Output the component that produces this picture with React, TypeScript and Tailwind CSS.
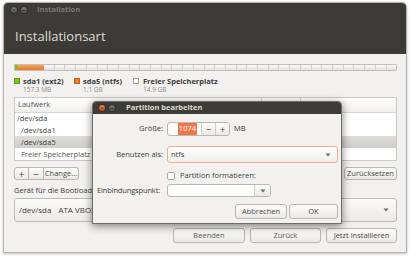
import React from "react";

const btn =
  "flex items-center justify-center rounded-[3px] border border-[#bab7b2] bg-gradient-to-b from-[#fcfcfb] to-[#ebe9e6] text-[#4a4a4a]";

function Arrow() {
  return (
    <svg width="6" height="4" viewBox="0 0 6 4">
      <path d="M0.5 0.5 L5.5 0.5 L3 3.5 Z" fill="#6b6964" />
    </svg>
  );
}

function Dots({ active }: { active?: boolean }) {
  return (
    <div className="flex items-center gap-[2px]">
      <div
        className={
          active
            ? "w-[8px] h-[8px] rounded-full bg-gradient-to-b from-[#f58b5c] to-[#dd4814] border border-[#2f2e2b] flex items-center justify-center text-[6px] leading-none text-[#3c3b37] font-bold"
            : "w-[8px] h-[8px] rounded-full bg-gradient-to-b from-[#7a7974] to-[#5c5b56] border border-[#2f2e2b] flex items-center justify-center text-[6px] leading-none text-[#3c3b37] font-bold"
        }
      >
        ×
      </div>
      <div className="w-[8px] h-[8px] rounded-full bg-gradient-to-b from-[#7a7974] to-[#5c5b56] border border-[#2f2e2b] flex items-center justify-center">
        <div className="w-[4px] h-[1px] bg-[#3c3b37]" />
      </div>
    </div>
  );
}

export default function App() {
  return (
    <div className="relative w-[410px] h-[257px] bg-white pt-[2px] pl-[3px] font-['Open_Sans',sans-serif] text-[7.5px] text-[#3c3c3c]">
      {/* Main window */}
      <div className="w-[404px] h-[251px] flex flex-col rounded-t-[5px] overflow-hidden border border-[#b5b3ae] bg-[#f2f1f0] shadow-[0_1px_3px_rgba(0,0,0,0.25)]">
        <div className="h-[51px] bg-[#3c3b37] flex flex-col">
          <div className="h-[14px] flex items-center pl-[6px] gap-[9px]">
            <Dots />
            <span className="font-bold text-[#7d7a73] text-[7.5px]">Installation</span>
          </div>
          <div className="pl-[11px] pt-[11px] text-[13px] leading-[16px] text-[#dfdbd2]">Installationsart</div>
        </div>

        <div className="flex flex-col pl-[10px] pr-[9px]">
          {/* partition bar */}
          <div className="mt-[10px] h-[7px] flex rounded-[1px] border border-[#c3c1bc] overflow-hidden">
            <div className="w-[2px] bg-[#6fc41d]" />
            <div className="w-[27px] bg-gradient-to-b from-[#f3a25a] to-[#e9772b]" />
            <div className="flex-1 flex bg-gradient-to-b from-[#fafafa] to-[#e2e1de]">
              {Array.from({ length: 33 }).map((_, i) => (
                <div key={i} className="flex-1 border-r border-[#d3d1cd] last:border-r-0" />
              ))}
            </div>
          </div>

          {/* legend */}
          <div className="mt-[6px] flex">
            <div className="flex w-[60px]">
              <div className="mt-[1px] w-[6px] h-[6px] bg-[#73c81f] border border-[#5a9f17]" />
              <div className="ml-[3px] flex flex-col">
                <span className="font-bold h-[9px] leading-[8px]">sda1 (ext2)</span>
                <span className="text-[6.5px] h-[7px] leading-[7px] text-[#8c8a86]">157.3 MB</span>
              </div>
            </div>
            <div className="flex w-[59px]">
              <div className="mt-[1px] w-[6px] h-[6px] bg-[#ee7b2c] border border-[#c45f1b]" />
              <div className="ml-[3px] flex flex-col">
                <span className="font-bold h-[9px] leading-[8px]">sda5 (ntfs)</span>
                <span className="text-[6.5px] h-[7px] leading-[7px] text-[#8c8a86]">1.1 GB</span>
              </div>
            </div>
            <div className="flex">
              <div className="mt-[1px] w-[6px] h-[6px] bg-white border border-[#9d9b97]" />
              <div className="ml-[4px] flex flex-col">
                <span className="font-bold h-[9px] leading-[8px]">Freier Speicherplatz</span>
                <span className="text-[6.5px] h-[7px] leading-[7px] text-[#8c8a86]">14.9 GB</span>
              </div>
            </div>
          </div>

          {/* table */}
          <div className="mt-[4px] h-[64px] bg-white border border-[#cbc8c3] flex flex-col">
            <div className="h-[15px] flex border-b border-[#d8d6d2] bg-gradient-to-b from-[#ffffff] to-[#f0efed]">
              <div className="w-[247px] pl-[3px] flex items-center border-r border-[#dcdad6] text-[#555]">Laufwerk</div>
              <div className="w-[39px] border-r border-[#dcdad6]" />
              <div className="flex-1" />
            </div>
            <div className="h-[12px] flex items-center pl-[2px]">/dev/sda</div>
            <div className="h-[12px] flex items-center pl-[6px]">/dev/sda1</div>
            <div className="h-[12px] flex items-center pl-[6px] bg-gradient-to-b from-[#dedcd8] to-[#cfcdc9]">/dev/sda5</div>
            <div className="h-[12px] flex items-center pl-[6px] text-[#555]">Freier Speicherplatz</div>
          </div>

          {/* table buttons */}
          <div className="mt-[6px] h-[13px] flex justify-between">
            <div className="flex">
              <div className={btn + " w-[15px] rounded-r-none text-[10px] leading-none"}>+</div>
              <div className={btn + " w-[15px] rounded-none border-l-0 text-[10px] leading-none"}>−</div>
              <div className={btn + " w-[35px] rounded-l-none border-l-0"}>Change...</div>
            </div>
            <div className={btn + " w-[53px]"}>Zurücksetzen</div>
          </div>

          <div className="mt-[6px] h-[9px] leading-[9px]">Gerät für die Bootloader-Installation:</div>

          <div className="mt-[3px] h-[24px] flex items-center rounded-[3px] border border-[#bdbab5] bg-gradient-to-b from-[#fbfbfa] to-[#eceae7] pl-[4px] pr-[7px]">
            <span className="text-[8px]">/dev/sda</span>
            <span className="ml-[7px] text-[8px]">ATA VBOX HARDDISK (8.6 GB)</span>
            <div className="ml-auto">
              <Arrow />
            </div>
          </div>

          <div className="mt-[6px] h-[15px] flex justify-end gap-[5px]">
            <div className={btn + " w-[72px] text-[#5a5a5a]"}>Beenden</div>
            <div className={btn + " w-[71px] text-[#5a5a5a]"}>Zurück</div>
            <div className={btn + " w-[71px] border-[#8c8984]"}>Jetzt installieren</div>
          </div>
        </div>
      </div>

      {/* Dialog window */}
      <div className="absolute left-[92px] top-[101px] w-[250px] h-[123px] flex flex-col rounded-t-[4px] overflow-hidden bg-[#f2f1f0] border border-[#6f6d68] shadow-[0_2px_9px_rgba(0,0,0,0.5)]">
        <div className="h-[12px] bg-[#3c3b37] flex items-center pl-[5px] gap-[10px]">
          <Dots active />
          <span className="font-bold text-[#dfdbd2]">Partition bearbeiten</span>
        </div>
        <div className="flex-1 flex flex-col pl-[3px] pr-[3px]">
          <div className="mt-[8px] h-[14px] grid grid-cols-[67px_1fr] gap-x-[4px] items-center">
            <span className="text-right">Größe:</span>
            <div className="flex items-center">
              <div className="w-[63px] h-[14px] flex rounded-[3px] border border-[#bab7b2] bg-white overflow-hidden">
                <div className="flex-1 flex items-center justify-end pr-[4px]">
                  <span className="bg-[#f07746] text-white px-[1px]">1074</span>
                </div>
                <div className="w-[14px] flex items-center justify-center border-l border-[#cfccc7] bg-gradient-to-b from-[#fcfcfb] to-[#ebe9e6] text-[9px] leading-none">−</div>
                <div className="w-[14px] flex items-center justify-center border-l border-[#cfccc7] bg-gradient-to-b from-[#fcfcfb] to-[#ebe9e6] text-[9px] leading-none">+</div>
              </div>
              <span className="ml-[4px]">MB</span>
            </div>
          </div>

          <div className="mt-[10px] h-[17px] grid grid-cols-[67px_1fr] gap-x-[4px] items-center">
            <span className="text-right">Benutzen als:</span>
            <div className="h-[17px] flex items-center rounded-[3px] border border-[#e9b08c] bg-gradient-to-b from-[#fdfdfc] to-[#efeeec] pl-[3px] pr-[6px]">
              <span>ntfs</span>
              <div className="ml-auto">
                <Arrow />
              </div>
            </div>
          </div>

          <div className="mt-[7px] h-[8px] grid grid-cols-[67px_1fr] gap-x-[4px] items-center">
            <span />
            <div className="flex items-center">
              <div className="w-[8px] h-[8px] rounded-[2px] border border-[#a9a6a1] bg-white" />
              <span className="ml-[5px]">Partition formatieren:</span>
            </div>
          </div>

          <div className="mt-[6px] h-[13px] grid grid-cols-[67px_1fr] gap-x-[4px] items-center">
            <span className="pl-[1px] tracking-[-0.15px] whitespace-nowrap">Einbindungspunkt:</span>
            <div className="w-[104px] h-[13px] flex rounded-[3px] border border-[#bab7b2] bg-white overflow-hidden">
              <div className="flex-1" />
              <div className="w-[16px] flex items-center justify-center border-l border-[#cfccc7] bg-gradient-to-b from-[#fcfcfb] to-[#ebe9e6]">
                <Arrow />
              </div>
            </div>
          </div>

          <div className="mt-[7px] h-[15px] flex justify-end gap-[2px]">
            <div className={btn + " w-[52px]"}>Abbrechen</div>
            <div className={btn + " w-[49px]"}>OK</div>
          </div>
        </div>
      </div>
    </div>
  );
}
